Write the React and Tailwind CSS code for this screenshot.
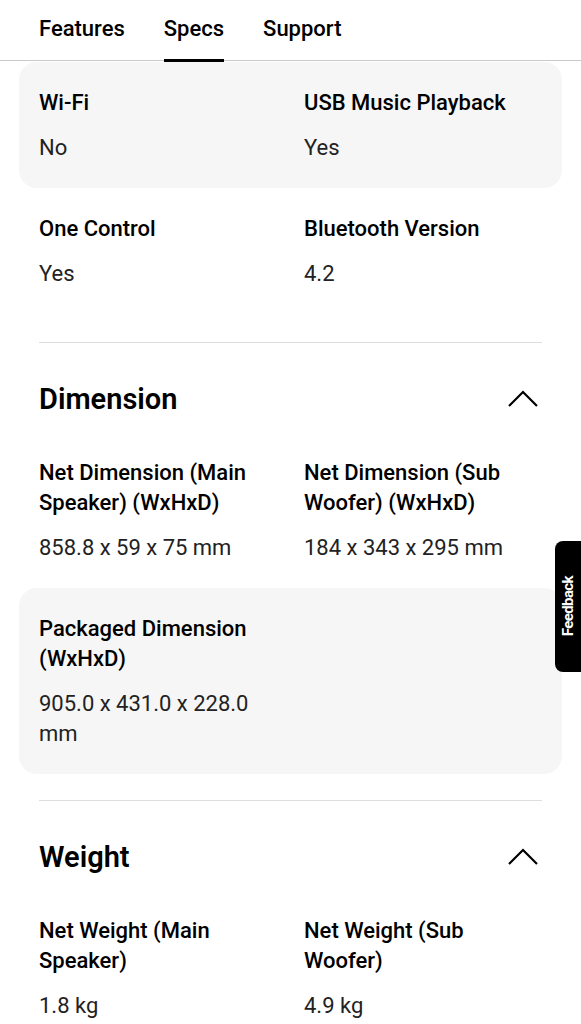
import React from 'react';

const tabs = ['Features', 'Specs', 'Support'];

const ChevronUp = () => (
    <svg width="32" height="18" viewBox="0 0 32 18" fill="none" className="mr-[3px]">
        <path d="M2 16 L16 2 L30 16" stroke="#000" strokeWidth="2.2" strokeLinejoin="miter" />
    </svg>
);

const Spec = ({ label, value }) => (
    <div className="flex flex-col gap-[15px]">
        <div className="text-[22px] leading-[30px] font-medium text-black">{label}</div>
        <div className="text-[22px] leading-[30px] font-normal text-[#222]">{value}</div>
    </div>
);

const Row = ({ items, shaded }) => (
    <div className={`grid grid-cols-[238px_1fr] gap-x-[27px] px-[20px] pt-[26px] pb-[25px] rounded-[18px] ${shaded ? 'bg-[#f6f6f6]' : ''}`}>
        {items.map((it, i) => (
            <Spec key={i} label={it.label} value={it.value} />
        ))}
    </div>
);

const Section = ({ title, rows, tight }) => (
    <div>
        <div className={`mx-[20px] h-px bg-[#dedede] ${tight ? 'mt-[26px]' : 'mt-[28px]'}`} />
        <div className="flex items-center justify-between px-[20px] pt-[38px] pb-[15px]">
            <h2 className="text-[29px] leading-[36px] font-semibold text-black">{title}</h2>
            <ChevronUp />
        </div>
        {rows.map((r, i) => (
            <Row key={i} items={r} shaded={i % 2 === 1} />
        ))}
    </div>
);

export default function App() {
    return (
        <div className="relative w-[581px] h-[1024px] overflow-hidden bg-white" style={{ fontFamily: 'Roboto, "Noto Sans", sans-serif' }}>
            {/* tab bar */}
            <div className="flex gap-[39px] h-[61px] px-[39px] border-b border-[#c9c9c9]">
                {tabs.map((t) => (
                    <div key={t} className="relative pt-[14px]">
                        <span className="text-[22px] leading-[30px] font-medium text-black">{t}</span>
                        {t === 'Specs' && <div className="absolute left-0 right-0 bottom-[-2px] h-[3px] bg-black" />}
                    </div>
                ))}
            </div>

            <div className="px-[19px] pt-px">
                <Row shaded items={[{ label: 'Wi-Fi', value: 'No' }, { label: 'USB Music Playback', value: 'Yes' }]} />
                <Row items={[{ label: 'One Control', value: 'Yes' }, { label: 'Bluetooth Version', value: '4.2' }]} />

                <Section
                    title="Dimension"
                    rows={[
                        [
                            { label: 'Net Dimension (Main Speaker) (WxHxD)', value: '858.8 x 59 x 75 mm' },
                            { label: 'Net Dimension (Sub Woofer) (WxHxD)', value: '184 x 343 x 295 mm' },
                        ],
                        [{ label: 'Packaged Dimension (WxHxD)', value: '905.0 x 431.0 x 228.0 mm' }],
                    ]}
                />

                <Section
                    tight
                    title="Weight"
                    rows={[
                        [
                            { label: 'Net Weight (Main Speaker)', value: '1.8 kg' },
                            { label: 'Net Weight (Sub Woofer)', value: '4.9 kg' },
                        ],
                    ]}
                />
            </div>

            {/* feedback tab */}
            <div className="absolute right-0 top-[541px] w-[26px] h-[131px] bg-black rounded-l-[8px] flex items-center justify-center">
                <span className="text-white text-[15px] font-bold tracking-[-0.6px] [writing-mode:vertical-rl] rotate-180">Feedback</span>
            </div>
        </div>
    );
}
